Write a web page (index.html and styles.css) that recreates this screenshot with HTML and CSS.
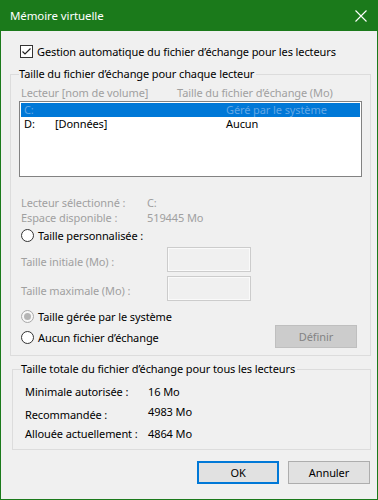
FILE: index.html
```html
<!DOCTYPE html>
<html lang="fr">

<head>
    <meta charset="UTF-8">
    <meta name="viewport" content="width=device-width, initial-scale=1.0">
    <title>Mémoire virtuelle</title>
    <link rel="stylesheet" href="styles.css">
</head>

<body>
    <div class="window">
        <div class="titlebar">
            <span>Mémoire virtuelle</span>
            <svg class="close" width="12" height="12" viewBox="0 0 12 12">
                <path d="M0.5 0.5 L11.5 11.5 M11.5 0.5 L0.5 11.5" stroke="#fff" stroke-width="1.1" fill="none" />
            </svg>
        </div>

        <div class="content">
            <div class="checkrow">
                <svg class="checkbox" width="13" height="13" viewBox="0 0 13 13">
                    <rect x="0.5" y="0.5" width="12" height="12" fill="#fff" stroke="#333" />
                    <path d="M2.5 6.5 L5 9 L10.5 3.5" stroke="#222" stroke-width="1.2" fill="none" />
                </svg>
                <span>Gestion automatique du fichier d’échange pour les lecteurs</span>
            </div>

            <fieldset class="group first">
                <legend>Taille du fichier d’échange pour chaque lecteur</legend>

                <div class="colhead">
                    <span class="col-drive">Lecteur [nom de volume]</span>
                    <span>Taille du fichier d’échange (Mo)</span>
                </div>

                <div class="listbox">
                    <div class="item selected">
                        <span class="c1">C:</span>
                        <span class="c2"></span>
                        <span>Géré par le système</span>
                    </div>
                    <div class="item">
                        <span class="c1">D:</span>
                        <span class="c2">[Données]</span>
                        <span>Aucun</span>
                    </div>
                </div>

                <div class="info">
                    <div class="inforow"><span class="lbl">Lecteur sélectionné :</span><span>C:</span></div>
                    <div class="inforow"><span class="lbl">Espace disponible :</span><span>519445 Mo</span></div>
                </div>

                <div class="radio custom">
                    <span class="dot"></span>
                    <span>Taille personnalisée :</span>
                </div>

                <div class="sizerow">
                    <span class="lbl">Taille initiale (Mo) :</span>
                    <span class="field"></span>
                </div>
                <div class="sizerow second">
                    <span class="lbl">Taille maximale (Mo) :</span>
                    <span class="field"></span>
                </div>

                <div class="bottomrow">
                    <div class="radios">
                        <div class="radio"><span class="dot checked"></span><span>Taille gérée par le système</span></div>
                        <div class="radio enabled"><span class="dot"></span><span>Aucun fichier d’échange</span></div>
                    </div>
                    <button class="btn disabled">Définir</button>
                </div>
            </fieldset>

            <fieldset class="group totals">
                <legend>Taille totale du fichier d’échange pour tous les lecteurs</legend>
                <div class="totrow"><span class="lbl">Minimale autorisée :</span><span>16 Mo</span></div>
                <div class="totrow"><span class="lbl">Recommandée :</span><span class="up">4983 Mo</span></div>
                <div class="totrow"><span class="lbl">Allouée actuellement :</span><span>4864 Mo</span></div>
            </fieldset>

            <div class="buttons">
                <button class="btn default">OK</button>
                <button class="btn">Annuler</button>
            </div>
        </div>
    </div>
</body>

</html>
```

FILE: styles.css
```css
* {
    box-sizing: border-box;
    margin: 0;
    padding: 0;
}

body {
    font-family: "Noto Sans", "Open Sans", sans-serif;
    font-size: 11px;
    letter-spacing: -0.1px;
    color: #000;
    background: #f0f0f0;
    white-space: nowrap;
}

.window {
    width: 378px;
    height: 500px;
    border: 1px solid #1b7a1b;
    border-top: none;
    background: #f0f0f0;
}

.titlebar {
    height: 31px;
    margin: 0 -1px;
    padding: 0 11px 0 10px;
    background: #1b7a1b;
    color: #fff;
    display: flex;
    align-items: center;
    justify-content: space-between;
    font-size: 11.5px;
}

.content {
    padding: 12px 6px 0 9px;
}

.checkrow {
    height: 16px;
    display: flex;
    align-items: center;
    gap: 4px;
    padding-left: 10px;
}

.group {
    border: 1px solid #dcdcdc;
    padding: 0 8px;
}

.group legend {
    line-height: 16px;
    padding: 0 2px 0 0;
}

.first {
    margin-top: 7px;
    padding-bottom: 7px;
}

.colhead {
    margin-top: 2px;
    height: 16px;
    display: flex;
    align-items: center;
    padding-left: 2px;
    color: #a0a0a0;
}

.col-drive {
    width: 156px;
}

.listbox {
    margin-top: 1px;
    height: 76px;
    border: 1px solid #828282;
    background: #fff;
    padding: 1px;
}

.item {
    height: 14px;
    line-height: 14px;
    display: flex;
    padding-left: 3px;
}

.item .c1 {
    width: 31px;
}

.item .c2 {
    width: 171px;
}

.selected {
    background: #0078d7;
    color: #64a7e4;
}

.info {
    margin-top: 18px;
    color: #a0a0a0;
}

.inforow {
    height: 15px;
    line-height: 15px;
    display: flex;
    padding-left: 2px;
}

.inforow .lbl {
    width: 126px;
}

.radio {
    height: 16px;
    display: flex;
    align-items: center;
    gap: 4px;
    padding-left: 2px;
}

.custom {
    margin-top: 2px;
}

.dot {
    width: 13px;
    height: 13px;
    border: 1px solid #a8a8a8;
    border-radius: 50%;
    background: #f7f7f7;
    display: flex;
    align-items: center;
    justify-content: center;
}

.radio.enabled .dot,
.custom .dot {
    border-color: #333;
    background: #fff;
}

.dot.checked::after {
    content: "";
    width: 7px;
    height: 7px;
    border-radius: 50%;
    background: #b5b5b5;
}

.sizerow {
    margin-top: 4px;
    height: 25px;
    display: flex;
    align-items: center;
    padding-left: 2px;
    color: #a0a0a0;
}

.sizerow .lbl {
    width: 146px;
    padding-top: 3px;
}

.field {
    width: 84px;
    height: 25px;
    border: 1px solid #cccccc;
    box-shadow: inset 0 0 0 1px #fafafa;
}

.bottomrow {
    margin-top: 7px;
    display: flex;
    justify-content: space-between;
    align-items: flex-end;
}

.radios {
    display: flex;
    flex-direction: column;
    gap: 5px;
    padding-bottom: 3px;
}

.btn {
    font-family: inherit;
    font-size: 11px;
    letter-spacing: -0.1px;
    height: 23px;
    background: #e1e1e1;
    border: 1px solid #adadad;
    color: #000;
}

.btn.disabled {
    width: 82px;
    margin-right: 5px;
    background: #cccccc;
    border-color: #bfbfbf;
    color: #838383;
}

.totals {
    margin-top: 5px;
    margin-left: 2px;
    padding: 0 8px 7px 12px;
}

.totals legend {
    margin-left: -4px;
}

.totrow {
    height: 16px;
    line-height: 16px;
    display: flex;
    margin-top: 7px;
}

.totrow + .totrow {
    margin-top: 7px;
}

.totrow:last-child {
    margin-top: 3px;
}

.totrow .lbl {
    width: 123px;
}

.up {
    margin-top: -3px;
}

.buttons {
    margin-top: 11px;
    display: flex;
    justify-content: flex-end;
    gap: 9px;
    padding-right: 1px;
}

.buttons .btn {
    width: 82px;
}

.btn.default {
    border: 1px solid #0078d7;
    box-shadow: inset 0 0 0 1px #0078d7;
}
```
